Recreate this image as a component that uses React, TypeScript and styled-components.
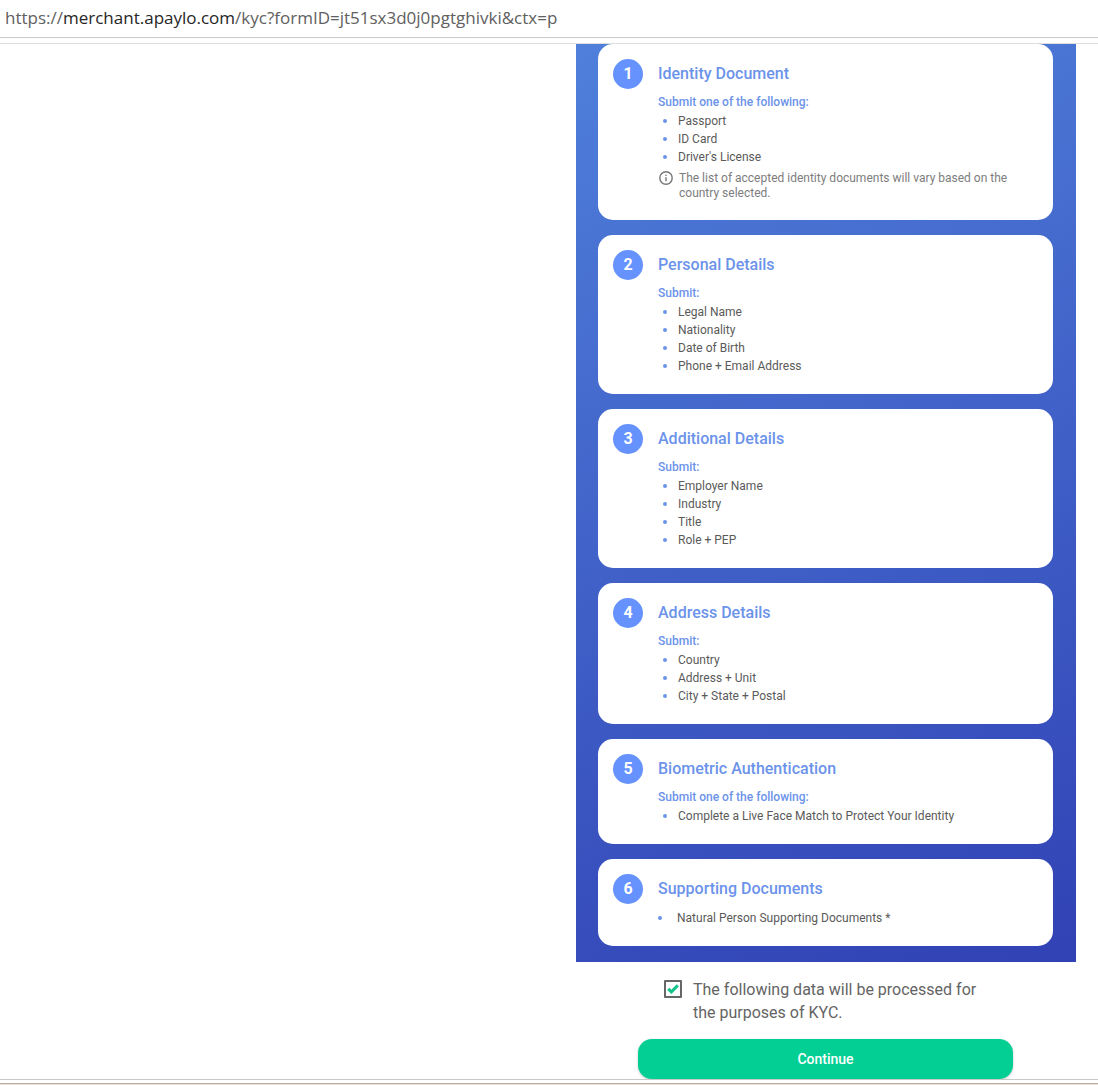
import React, { useState } from "react";
import styled, { createGlobalStyle } from "styled-components";

const GlobalStyle = createGlobalStyle`
  *, *::before, *::after { box-sizing: border-box; }
  body { margin: 0; background: #fff; font-family: Roboto, sans-serif; color: #5a5a5a; }
`;

const Page = styled.div`
  display: flex;
  flex-direction: column;
  min-height: 100vh;
`;

const AddressBar = styled.header`
  height: 38px;
  padding: 0 5px;
  border-bottom: 1px solid #c9c9c9;
  font-family: "Open Sans", "Noto Sans", sans-serif;
  font-size: 17px;
  line-height: 36px;
  color: #606060;
  white-space: nowrap;
`;

const Host = styled.span`
  color: #262626;
`;

const Toolbar = styled.div`
  height: 6px;
  border-bottom: 1px solid #dedede;
`;

const Main = styled.main`
  flex: 1;
  display: flex;
  flex-direction: column;
  align-items: flex-end;
  padding-right: 22px;
`;

const Column = styled.div`
  width: 100%;
  max-width: 500px;
`;

const Steps = styled.ol`
  display: flex;
  flex-direction: column;
  gap: 15px;
  margin: 0;
  padding: 0 23px 16px 22px;
  list-style: none;
  background: linear-gradient(160deg, #4f7fdb 0%, #3142b4 100%);
`;

const Card = styled.li`
  display: flex;
  gap: 15px;
  padding: 15px 15px 19px;
  border-radius: 15px;
  background: #fff;
`;

const StepNumber = styled.span`
  flex: none;
  width: 30px;
  height: 30px;
  border-radius: 50%;
  background: #6592fd;
  color: #fff;
  font-size: 16px;
  font-weight: 700;
  line-height: 30px;
  text-align: center;
`;

const StepBody = styled.div`
  flex: 1;
`;

const Title = styled.h2`
  margin: 0 0 4px;
  font-size: 16px;
  font-weight: 500;
  line-height: 30px;
  color: #6c93ea;
`;

const Prompt = styled.p`
  margin: 0;
  font-size: 12px;
  font-weight: 500;
  line-height: 18px;
  color: #6c93ea;
`;

const Items = styled.ul<{ $flush?: boolean }>`
  margin: 0;
  padding: 1px 0 0 ${(p) => (p.$flush ? 0 : 5)}px;
  list-style: none;
`;

const Item = styled.li<{ $flush?: boolean }>`
  display: flex;
  align-items: center;
  gap: ${(p) => (p.$flush ? 15 : 11)}px;
  font-size: 12px;
  line-height: 18px;
  color: #5a5a5a;

  &::before {
    content: "";
    width: 4px;
    height: 4px;
    border-radius: 50%;
    background: #6c93ea;
  }
`;

const Note = styled.p`
  display: flex;
  gap: 5px;
  margin: 5px 0 0;
  font-size: 12px;
  line-height: 15px;
  color: #7d7d7d;

  svg { flex: none; }
`;

const Actions = styled.form`
  display: flex;
  flex-direction: column;
  gap: 15px;
  padding: 16px 63px 0 62px;
`;

const Consent = styled.label`
  display: flex;
  gap: 11px;
  padding: 0 26px;
  font-size: 16px;
  line-height: 23px;
  color: #646464;
`;

const TickWrap = styled.span`
  display: grid;
  flex: none;
  width: 18px;
  height: 18px;
  margin-top: 2px;

  > * { grid-area: 1 / 1; place-self: center; }
  svg { pointer-events: none; }
`;

const TickBox = styled.input`
  appearance: none;
  width: 18px;
  height: 18px;
  margin: 0;
  border: 2px solid #666;
  border-radius: 1px;
  background: #fff;
`;

const Continue = styled.button`
  height: 40px;
  border: 0;
  border-radius: 14px;
  background: #03cf94;
  box-shadow: 0 1px 3px rgba(0, 0, 0, 0.2);
  color: #fff;
  font-family: inherit;
  font-size: 14px;
  font-weight: 500;
`;

const WindowEdge = styled.footer`
  position: relative;
  height: 6px;
  border-top: 1px solid #c9c9c9;
  border-bottom: 1px solid #eae0da;
  background: linear-gradient(#fff 3px, #b9aca4 3px);
`;

interface Step {
  title: string;
  prompt?: string;
  items: string[];
  note?: string;
}

const steps: Step[] = [
  {
    title: "Identity Document",
    prompt: "Submit one of the following:",
    items: ["Passport", "ID Card", "Driver's License"],
    note: "The list of accepted identity documents will vary based on the country selected.",
  },
  {
    title: "Personal Details",
    prompt: "Submit:",
    items: ["Legal Name", "Nationality", "Date of Birth", "Phone + Email Address"],
  },
  {
    title: "Additional Details",
    prompt: "Submit:",
    items: ["Employer Name", "Industry", "Title", "Role + PEP"],
  },
  {
    title: "Address Details",
    prompt: "Submit:",
    items: ["Country", "Address + Unit", "City + State + Postal"],
  },
  {
    title: "Biometric Authentication",
    prompt: "Submit one of the following:",
    items: ["Complete a Live Face Match to Protect Your Identity"],
  },
  {
    title: "Supporting Documents",
    items: ["Natural Person Supporting Documents *"],
  },
];

const InfoIcon = () => (
  <svg width="16" height="16" viewBox="0 0 16 16" fill="none" stroke="#777" aria-hidden="true">
    <circle cx="8" cy="7" r="6.2" strokeWidth="1.4" />
    <path d="M8 6.3v4M8 3.7v1.4" strokeWidth="1.4" />
  </svg>
);

const StepCard = ({ step, number }: { step: Step; number: number }) => {
  const flush = !step.prompt;
  return (
    <Card>
      <StepNumber>{number}</StepNumber>
      <StepBody>
        <Title>{step.title}</Title>
        {step.prompt && <Prompt>{step.prompt}</Prompt>}
        <Items $flush={flush}>
          {step.items.map((item) => (
            <Item key={item} $flush={flush}>{item}</Item>
          ))}
        </Items>
        {step.note && (
          <Note>
            <InfoIcon />
            <span>{step.note}</span>
          </Note>
        )}
      </StepBody>
    </Card>
  );
};

export default function App() {
  const [agreed, setAgreed] = useState(true);
  return (
    <Page>
      <GlobalStyle />
      <AddressBar>
        https://<Host>merchant.apaylo.com</Host>/kyc?formID=jt51sx3d0j0pgtghivki&amp;ctx=p
      </AddressBar>
      <Toolbar />
      <Main>
        <Column>
          <Steps>
            {steps.map((step, i) => (
              <StepCard key={step.title} step={step} number={i + 1} />
            ))}
          </Steps>
          <Actions onSubmit={(e) => e.preventDefault()}>
            <Consent htmlFor="consent">
              <TickWrap>
                <TickBox
                  id="consent"
                  type="checkbox"
                  checked={agreed}
                  onChange={(e) => setAgreed(e.target.checked)}
                />
                {agreed && (
                  <svg width="12" height="10" viewBox="0 0 12 10" fill="none" stroke="#12c48c" strokeWidth="3" aria-hidden="true">
                    <path d="M1.2 4.8 4.4 7.8 10.8 1.4" />
                  </svg>
                )}
              </TickWrap>
              <span>The following data will be processed for the purposes of KYC.</span>
            </Consent>
            <Continue type="submit" disabled={!agreed}>Continue</Continue>
          </Actions>
        </Column>
      </Main>
      <WindowEdge />
    </Page>
  );
}
